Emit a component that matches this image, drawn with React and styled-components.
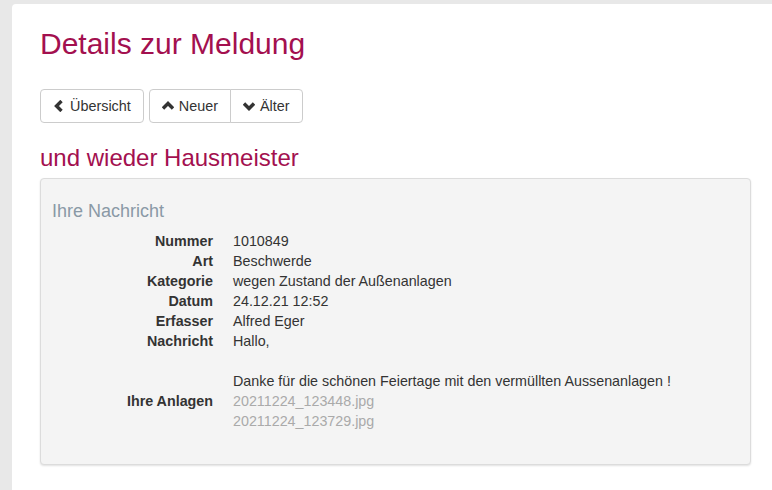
import React from "react";
import styled, { createGlobalStyle } from "styled-components";

const GlobalStyle = createGlobalStyle`
	html, body {
		margin: 0;
		padding: 0;
		background-color: #e8e8e8;
		font-family: "Liberation Sans", Arial, sans-serif;
		font-size: 14px;
		color: #333;
	}
`;

const Page = styled.div`
	padding: 4px 0 0 12px;
	min-height: 486px;
`;

const Card = styled.main`
	background-color: #fff;
	border-top-left-radius: 4px;
	padding: 22px 20px 40px 28px;
	min-height: 460px;
	box-sizing: border-box;
`;

const Title = styled.h1`
	margin: 0 0 27px;
	font-size: 30px;
	font-weight: normal;
	line-height: 36px;
	color: #a3104f;
`;

const Toolbar = styled.div`
	display: flex;
	gap: 5px;
	margin-bottom: 22px;
`;

const ButtonGroup = styled.div`
	display: flex;
	& > button + button {
		margin-left: -1px;
	}
	& > button:not(:first-child) {
		border-top-left-radius: 0;
		border-bottom-left-radius: 0;
	}
	& > button:not(:last-child) {
		border-top-right-radius: 0;
		border-bottom-right-radius: 0;
	}
`;

const Button = styled.button`
	display: flex;
	align-items: center;
	gap: 5px;
	height: 34px;
	padding: 0 12px;
	background: #fff;
	border: 1px solid #ccc;
	border-radius: 4px;
	font-family: inherit;
	font-size: 14.4px;
	color: #333;
	cursor: pointer;
`;

const Subtitle = styled.h2`
	margin: 0 0 7px;
	font-size: 24px;
	font-weight: normal;
	line-height: 26px;
	color: #a3104f;
`;

const Panel = styled.section`
	width: 711px;
	background-color: #f4f4f4;
	border: 1px solid #dcdcdc;
	border-radius: 4px;
	box-shadow: 0 1px 2px rgba(0, 0, 0, 0.12);
	padding: 22px 11px 33px;
	box-sizing: border-box;
`;

const PanelHeading = styled.h3`
	margin: 0 0 10px;
	font-size: 18px;
	font-weight: normal;
	line-height: 20px;
	color: #8a99a6;
`;

const Details = styled.dl`
	display: grid;
	grid-template-columns: 161px 1fr;
	column-gap: 20px;
	margin: 0;
	font-size: 14.3px;
	line-height: 20px;
`;

const Term = styled.dt`
	font-weight: bold;
	text-align: right;
	grid-column: 1;
`;

const Value = styled.dd`
	margin: 0;
	grid-column: 2;
`;

const Attachment = styled.a`
	display: block;
	color: #aaa;
	text-decoration: none;
`;

const Chevron = ({ dir }) => {
	const paths = {
		left: "M8.5 1 L3.5 6 L8.5 11",
		up: "M1 8.5 L6 3.5 L11 8.5",
		down: "M1 3.5 L6 8.5 L11 3.5",
	};
	return (
		<svg width="12" height="12" viewBox="0 0 12 12">
			<path d={paths[dir]} fill="none" stroke="#333" strokeWidth="3.4" strokeLinejoin="miter" />
		</svg>
	);
};

const details = [
	["Nummer", "1010849"],
	["Art", "Beschwerde"],
	["Kategorie", "wegen Zustand der Außenanlagen"],
	["Datum", "24.12.21 12:52"],
	["Erfasser", "Alfred Eger"],
];

const App = () => (
	<>
		<GlobalStyle />
		<Page>
			<Card>
				<Title>Details zur Meldung</Title>
				<Toolbar>
					<Button>
						<Chevron dir="left" /> Übersicht
					</Button>
					<ButtonGroup>
						<Button>
							<Chevron dir="up" /> Neuer
						</Button>
						<Button>
							<Chevron dir="down" /> Älter
						</Button>
					</ButtonGroup>
				</Toolbar>
				<Subtitle>und wieder Hausmeister</Subtitle>
				<Panel>
					<PanelHeading>Ihre Nachricht</PanelHeading>
					<Details>
						{details.map(([term, value]) => (
							<React.Fragment key={term}>
								<Term>{term}</Term>
								<Value>{value}</Value>
							</React.Fragment>
						))}
						<Term>Nachricht</Term>
						<Value>
							Hallo,
							<br />
							<br />
							Danke für die schönen Feiertage mit den vermüllten Aussenanlagen !
						</Value>
						<Term>Ihre Anlagen</Term>
						<Value>
							<Attachment href="#">20211224_123448.jpg</Attachment>
							<Attachment href="#">20211224_123729.jpg</Attachment>
						</Value>
					</Details>
				</Panel>
			</Card>
		</Page>
	</>
);

export default App;
